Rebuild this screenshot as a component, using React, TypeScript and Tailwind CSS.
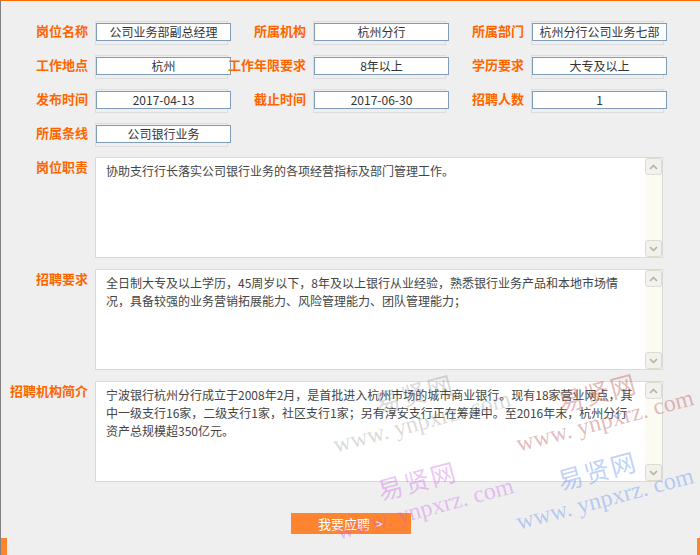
import React from 'react';

const fields: [string, string][][] = [
  [['岗位名称', '公司业务部副总经理'], ['所属机构', '杭州分行'], ['所属部门', '杭州分行公司业务七部']],
  [['工作地点', '杭州'], ['工作年限要求', '8年以上'], ['学历要求', '大专及以上']],
  [['发布时间', '2017-04-13'], ['截止时间', '2017-06-30'], ['招聘人数', '1']],
  [['所属条线', '公司银行业务']],
];

const blocks: [string, string][] = [
  ['岗位职责', '协助支行行长落实公司银行业务的各项经营指标及部门管理工作。'],
  ['招聘要求', '全日制大专及以上学历，45周岁以下，8年及以上银行从业经验，熟悉银行业务产品和本地市场情况，具备较强的业务营销拓展能力、风险管理能力、团队管理能力；'],
  ['招聘机构简介', '宁波银行杭州分行成立于2008年2月，是首批进入杭州市场的城市商业银行。现有18家营业网点，其中一级支行16家，二级支行1家，社区支行1家；另有淳安支行正在筹建中。至2016年末，杭州分行资产总规模超350亿元。'],
];

function Label({ text }: { text: string }) {
  return (
    <div className="w-[76px] flex justify-end whitespace-nowrap text-[13px] leading-[18px] font-bold text-[#ff6600]">
      {text}
    </div>
  );
}

function Field({ label, value }: { label: string; value: string }) {
  return (
    <div className="flex items-center">
      <Label text={label} />
      <div className="ml-[7px] mr-[2px] mt-[4px] w-[133px] h-[24px] border border-[#dcdcdc] pt-[1px]">
        <div className="w-[135px] h-[18px] border border-[#7f9db9] bg-white text-center text-[12px] leading-[16px] text-[#333] whitespace-nowrap overflow-hidden">
          {value}
        </div>
      </div>
    </div>
  );
}

function Chevron({ up }: { up?: boolean }) {
  return (
    <div className="w-[17px] h-[17px] rounded-[3px] border border-[#dddcd0] bg-[#f2f1eb] flex items-center justify-center">
      <svg width="9" height="6" viewBox="0 0 9 6">
        <path d={up ? 'M1 5 L4.5 1.5 L8 5' : 'M1 1 L4.5 4.5 L8 1'} fill="none" stroke="#b5b4a6" strokeWidth="1.6" />
      </svg>
    </div>
  );
}

function TextBlock({ label, text }: { label: string; text: string }) {
  return (
    <div className="flex items-start">
      <div className="pt-[1px]">
        <Label text={label} />
      </div>
      <div className="ml-[7px] w-[568px] h-[101px] border border-[#d9d9d9] bg-white flex">
        <div className="pl-[10px] pt-[4px] w-[540px] text-[12px] leading-[18px] text-[#444]">
          <div className="w-[530px]">{text}</div>
        </div>
        <div className="ml-auto w-[17px] h-full bg-[#fbfbf4] flex flex-col justify-between">
          <Chevron up />
          <Chevron />
        </div>
      </div>
    </div>
  );
}

// watermark overlay, lies over the form
function Mark({ x, y, color }: { x: number; y: number; color: string }) {
  return (
    <div
      className="absolute z-10 w-[190px] h-[60px] flex flex-col items-center pointer-events-none -rotate-[15deg]"
      style={{ left: x - 95, top: y - 30, color }}
    >
      <div className="text-[25px] leading-[30px] font-normal tracking-[2px]">易贤网</div>
      <div className="text-[24px] leading-[30px] whitespace-nowrap font-['Liberation_Serif',serif]">www. ynpxrz. com</div>
    </div>
  );
}

export default function App() {
  return (
    <div className="relative w-[700px] h-[555px] overflow-hidden bg-[#efefef] border-t border-t-[#ff6a00] border-l border-l-[#808080] flex flex-col font-['Noto_Sans_CJK_SC','Noto_Sans',sans-serif]">
      <div className="pt-[13px] pl-[11px]">
        {fields.map((row, i) => (
          <div key={i} className="flex h-[34px] items-center">
            {row.map(([l, v]) => (
              <Field key={l} label={l} value={v} />
            ))}
          </div>
        ))}
      </div>

      <div className="mt-[7px] pl-[11px] flex flex-col gap-[11px]">
        {blocks.map(([l, t]) => (
          <TextBlock key={l} label={l} text={t} />
        ))}
      </div>

      <div className="mt-[31px] mx-auto w-[120px] h-[21px] bg-[#ff8430] text-white text-[13px] leading-[21px] text-center">
        我要应聘&nbsp;&nbsp;&gt;
      </div>

      <div className="mt-auto flex justify-between items-end">
        <div className="w-[6px] h-[17px] bg-[#ff8430]" />
        <div className="w-[3px] h-[17px] bg-[#ff8430]" />
      </div>

      <Mark x={417} y={406} color="rgba(130,130,130,0.3)" />
      <Mark x={600} y={405} color="rgba(185,80,80,0.4)" />
      <Mark x={420} y={493} color="rgba(200,90,230,0.35)" />
      <Mark x={600} y={483} color="rgba(90,140,240,0.4)" />
    </div>
  );
}
